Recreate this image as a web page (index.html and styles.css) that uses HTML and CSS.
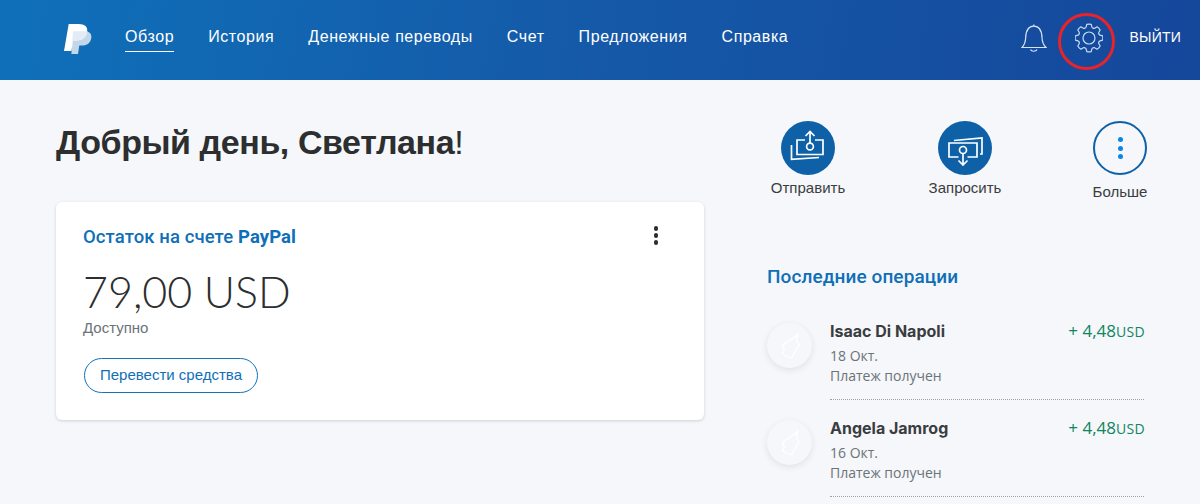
FILE: index.html
```html
<!DOCTYPE html>
<html lang="ru">
<head>
<meta charset="utf-8">
<title>PayPal</title>
<link rel="stylesheet" href="styles.css">
</head>
<body>
<header class="topbar">
  <svg class="logo" viewBox="0 0 28 32" width="28" height="32" aria-label="PayPal">
    <path d="M9 8h11c5.500 0 8 3 7.300 7-.8 5-4.300 7.500-9 7.500h-3L14 31H7.400z" fill="#c3d6ea"/>
    <path d="M4.700 1h9.800c6.500 0 9.500 2.900 8.600 7.800-.9 5.700-4.700 8.700-10.300 8.700H9.200L7.400 28H0z" fill="#fff"/>
    <path d="M9 8.200h12.800c1.400 0 1.700.1 1.700.1-.9 5.900-4.900 9.200-11 9.200H9.200L7.800 26z" fill="#e3ecf6"/>
  </svg>
  <nav class="nav">
    <a class="nav-link is-active">Обзор</a>
    <a class="nav-link">История</a>
    <a class="nav-link">Денежные переводы</a>
    <a class="nav-link">Счет</a>
    <a class="nav-link">Предложения</a>
    <a class="nav-link">Справка</a>
  </nav>
  <div class="tools">
    <svg class="bell" viewBox="0 0 26 30" width="26" height="30" fill="none" stroke="#d5e3f3" stroke-width="1.200">
      <path d="M1 24.500c2.500-2.500 3.500-5 3.700-10C5 7 8 3.200 12.800 3.200S20.700 7 21 14.500c.2 5 1.300 7.500 4 10z"/>
      <path d="M12.800 3.200V1.500"/>
      <path d="M9.500 26.500c.8 2.300 5.700 2.300 6.500 0"/>
    </svg>
    <span class="gear-wrap">
      <svg class="gear" viewBox="0 0 28 30" width="28" height="30" fill="none" stroke="#c9dcf1" stroke-width="1.200" stroke-linejoin="round">
        <defs>
          <path id="tooth" d="M-4.200-9.800Q-3 -10.200 -2.900-11L-2.200-13.600Q0-14.200 2.200-13.600L2.900-11Q3-10.200 4.200-9.800"/>
        </defs>
        <g transform="translate(14 15)">
          <use href="#tooth"/>
          <use href="#tooth" transform="rotate(45)"/>
          <use href="#tooth" transform="rotate(90)"/>
          <use href="#tooth" transform="rotate(135)"/>
          <use href="#tooth" transform="rotate(180)"/>
          <use href="#tooth" transform="rotate(225)"/>
          <use href="#tooth" transform="rotate(270)"/>
          <use href="#tooth" transform="rotate(315)"/>
          <circle r="6"/>
        </g>
      </svg>
      <span class="gear-ring"></span>
    </span>
    <a class="logout">ВЫЙТИ</a>
  </div>
</header>
<main class="page">
  <section class="left">
    <h1 class="greeting"><b>Добрый день, Светлана</b>!</h1>
    <article class="card">
      <div class="card-head">
        <h2 class="card-title">Остаток на счете <b>PayPal</b></h2>
        <span class="dots dots-dark"><i></i><i></i><i></i></span>
      </div>
      <div class="amount">79,00 USD</div>
      <div class="avail">Доступно</div>
      <a class="btn">Перевести средства</a>
    </article>
  </section>
  <aside class="right">
    <div class="actions">
      <div class="action">
        <span class="circle">
          <svg viewBox="0 0 54 54" width="54" height="54" fill="none" stroke="#fff" stroke-width="1.700">
            <path d="M24 19h-8v14.500h26V19h-8"/>
            <path d="M10.500 24v14.300l27.500-1.800"/>
            <circle cx="29" cy="25.500" r="3.400"/>
            <path d="M29 22V10.500M24.500 15l4.500-4.500 4.500 4.500"/>
          </svg>
        </span>
        <span class="action-label">Отправить</span>
      </div>
      <div class="action">
        <span class="circle">
          <svg viewBox="0 0 54 54" width="54" height="54" fill="none" stroke="#fff" stroke-width="1.700">
            <path d="M20.500 36H11V22h28v14h-9.500"/>
            <path d="M16 19.500l28-2.500v16h-2"/>
            <circle cx="25" cy="29" r="3.500"/>
            <path d="M25 32.500V44M20.500 39.500L25 44l4.500-4.500"/>
          </svg>
        </span>
        <span class="action-label">Запросить</span>
      </div>
      <div class="action action-more">
        <span class="circle circle-outline"><span class="dots dots-blue"><i></i><i></i><i></i></span></span>
        <span class="action-label">Больше</span>
      </div>
    </div>
    <h2 class="recent-title">Последние операции</h2>
    <ul class="tx-list">
      <li class="tx">
        <span class="avatar">
          <svg viewBox="0 0 24 28" width="24" height="28" fill="none" stroke="#fff" stroke-width="1.300" stroke-linejoin="round">
            <path d="M19.700 2Q17 5.500 15 6.500T12 8.500Q8 10 5.800 12.500T5.300 15.500L6.300 18Q6 20 4.300 21.300L8 24Q11 25 13.700 25.700 15.500 24 15.500 22.500L17 19.700Q19 17 19.500 15.500L21.300 13 18.700 8.500z"/>
          </svg>
        </span>
        <div class="tx-body">
          <div class="tx-info">
            <div class="tx-name">Isaac Di Napoli</div>
            <div class="tx-meta">18 Окт.</div>
            <div class="tx-meta">Платеж получен</div>
          </div>
          <div class="tx-sum">+ 4,48<small>USD</small></div>
        </div>
      </li>
      <li class="tx">
        <span class="avatar">
          <svg viewBox="0 0 24 28" width="24" height="28" fill="none" stroke="#fff" stroke-width="1.300" stroke-linejoin="round">
            <path d="M19.700 2Q17 5.500 15 6.500T12 8.500Q8 10 5.800 12.500T5.300 15.500L6.300 18Q6 20 4.300 21.300L8 24Q11 25 13.700 25.700 15.500 24 15.500 22.500L17 19.700Q19 17 19.500 15.500L21.300 13 18.700 8.500z"/>
          </svg>
        </span>
        <div class="tx-body">
          <div class="tx-info">
            <div class="tx-name">Angela Jamrog</div>
            <div class="tx-meta">16 Окт.</div>
            <div class="tx-meta">Платеж получен</div>
          </div>
          <div class="tx-sum">+ 4,48<small>USD</small></div>
        </div>
      </li>
    </ul>
  </aside>
</main>
</body>
</html>
```
FILE: styles.css
```css
* { box-sizing: border-box; }
html, body { margin: 0; height: 504px; overflow: hidden; }
body { background: #f5f7fa; font-family: "Liberation Sans", Arial, sans-serif; color: #2c2e2f; }
a { color: inherit; text-decoration: none; }
i { display: block; }

.topbar {
  height: 80px;
  background: linear-gradient(100deg, #0f70b9 0%, #1559a8 50%, #15479b 100%);
  display: flex;
  align-items: center;
  padding: 0 19px 0 64px;
  color: #fff;
}
.logo { margin: -3px 33px 0 0; flex: none; }
.nav { display: flex; gap: 34px; flex: 1; }
.nav-link { font-size: 16px; line-height: 24px; letter-spacing: .58px; padding: 2px 0 1px; border-bottom: 1px solid transparent; margin-top: -6px; height: 29px; }
.nav-link.is-active { border-bottom-color: #fff; }
.tools { display: flex; align-items: center; margin-top: -4px; }
.bell { margin-right: 28px; }
.gear-wrap { position: relative; display: flex; margin-top: -1px; }
.gear-ring {
  position: absolute;
  left: -17px; top: -10px;
  width: 57px; height: 57px;
  border: 3px solid #e8232a;
  border-radius: 50%;
}
.logout { font-size: 14px; letter-spacing: .2px; margin: -2px 0 0 27px; }

.page { display: flex; padding: 0 53px 0 56px; }
.left { width: 648px; flex: none; }
.greeting { margin: 40px 0 0; font-size: 34px; line-height: 44px; font-weight: 400; height: 82px; letter-spacing: -.42px; }
.greeting b { font-weight: 700; }
.card {
  height: 218px;
  background: #fff;
  border-radius: 6px;
  box-shadow: 0 1px 3px rgba(60, 70, 90, .22);
  padding: 24px 27px;
}
.card-head { display: flex; justify-content: space-between; }
.card-title { margin: 0; font-family: Roboto, sans-serif; font-size: 18.500px; line-height: 22px; font-weight: 500; color: #0f6fb8; letter-spacing: .1px; }
.card-title b { font-weight: 700; }
.dots { display: flex; flex-direction: column; }
.dots i { border-radius: 50%; }
.dots-dark { margin: 0 19px 0 0; gap: 2.500px; }
.dots-dark i { width: 4.500px; height: 4.500px; background: #2c2e2f; }
.dots-blue { gap: 3.300px; }
.dots-blue i { width: 5px; height: 5px; background: #0a85e8; }
.amount { margin-top: 17px; font-family: Lato, sans-serif; font-weight: 300; font-size: 43px; line-height: 54px; color: #2c2e2f; }
.avail { font-size: 15px; line-height: 18px; color: #6c7378; }
.btn {
  display: inline-block;
  margin: 21px 0 0 1px;
  height: 35px;
  line-height: 32px;
  padding: 0 15px;
  border: 1px solid #1272bb;
  border-radius: 18px;
  font-size: 15px;
  color: #0f6fb8;
}

.right { margin-left: 63px; flex: 1; }
.actions { display: flex; gap: 83px; padding: 41px 0 0 4px; height: 186px; }
.action { display: flex; flex-direction: column; align-items: center; width: 74px; }
.action-more { width: 54px; margin-left: auto; }
.circle {
  width: 54px; height: 54px; border-radius: 50%;
  background: #0e60a7;
  display: flex; align-items: center; justify-content: center;
}
.circle-outline { background: transparent; border: 2px solid #0e60a7; }
.action-label { margin-top: 4px; font-size: 15px; line-height: 18px; color: #3a3d3f; white-space: nowrap; }
.action-more .action-label { margin-top: 8px; }
.recent-title { margin: 0; font-family: Roboto, sans-serif; font-size: 19px; line-height: 22px; font-weight: 500; color: #0f6fb8; letter-spacing: .1px; }
.tx-list { list-style: none; margin: 25px 0 0; padding: 0; }
.tx { display: flex; height: 87px; padding-top: 7px; }
.tx + .tx { margin-top: 10px; }
.avatar {
  width: 45px; height: 45px; border-radius: 50%;
  background: #f6f7fb;
  box-shadow: 0 2px 6px rgba(60, 70, 90, .12);
  display: flex; align-items: center; justify-content: center;
  flex: none; margin-top: 3px;
}
.tx-body { flex: 1; display: flex; justify-content: space-between; margin: 0 3px 0 18px; border-bottom: 1px dotted #9aa2a8; }
.tx-name { font-family: Inter, sans-serif; font-weight: 700; font-size: 16px; line-height: 22px; color: #3a3d3f; margin-bottom: 4px; }
.tx-meta { font-family: "Open Sans", sans-serif; font-size: 14px; line-height: 20px; color: #6c7378; }
.tx-sum { font-family: "Open Sans", sans-serif; font-size: 17px; line-height: 22px; color: #108560; margin-right: -1px; }
.tx-sum small { font-size: 14px; letter-spacing: .3px; }
```
